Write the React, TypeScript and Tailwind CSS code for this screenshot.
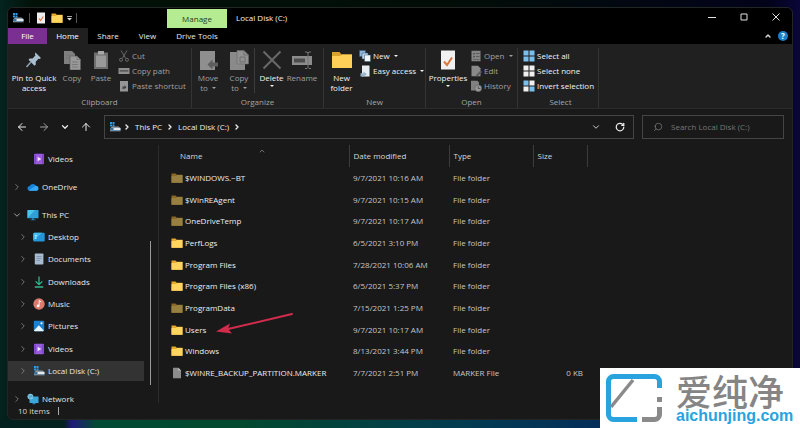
import type { ReactNode } from "react";
import { ArrowLeft, ArrowRight, ArrowUp, ChevronDown, ChevronRight, ChevronUp, RotateCw, Search } from "lucide-react";

type IconProps = { className?: string };

function DriveIcon({ className = "w-3 h-3" }: IconProps) {
  return (
    <svg viewBox="0 0 12 12" className={className}>
      <path d="M1 1h2v2H1zM3.500 1h2v2h-2zM1 3.500h2v2H1zM3.500 3.500h2v2h-2z" fill="#2f9be6" />
      <path d="M3 5.500h6.500L11.500 7H1.500z" fill="#8d9aa4" />
      <path d="M1 7h10.500v3H1z" fill="#3b6f96" />
      <path d="M4.500 7h7v2h-7z" fill="#e3e8ec" />
      <path d="M1 9.500h10.500v.8H1z" fill="#9fb4c2" />
    </svg>
  );
}

function FolderIcon({ dim = false }: { dim?: boolean }) {
  return (
    <svg viewBox="0 0 12 11" className={dim ? "w-3 h-3 shrink-0 opacity-55" : "w-3 h-3 shrink-0"}>
      <path d="M0.5 1h4l1.2 1.3h5.8v7.9h-11z" fill="#e8a92c" />
      <path d="M0.5 3.6h4.4l1.2-1h5.4v7.6h-11z" fill="#ffd560" />
    </svg>
  );
}

function FileIcon() {
  return (
    <svg viewBox="0 0 12 12" className="w-3 h-3 shrink-0">
      <path d="M2 .8h5.4L10 3.4v7.8H2z" fill="#8b8b8b" />
      <path d="M7.4.8v2.6H10z" fill="#c4c4c4" />
    </svg>
  );
}

function VideosIcon() {
  return (
    <svg viewBox="0 0 12 12" className="w-3 h-3">
      <rect x="1" y=".7" width="10" height="10.6" rx="1" fill="#9a5be0" />
      <path d="M1.6 1.5h1v9h-1zM9.4 1.5h1v9h-1z" fill="#6c35b5" />
      <path d="M4.6 3.8v4.4L8.2 6z" fill="#f4e9ff" />
    </svg>
  );
}

function OneDriveIcon() {
  return (
    <svg viewBox="0 0 12 12" className="w-3 h-3">
      <path d="M3 9.8a2.4 2.4 0 0 1-.3-4.8A3.5 3.5 0 0 1 9 4.8a2.6 2.6 0 0 1 .5 5z" fill="#1683dc" />
      <path d="M2 9.3 7.5 5.4a2.5 2.5 0 0 1 4 2.3 2.1 2.1 0 0 1-2 2.1H3z" fill="#37a7f2" />
    </svg>
  );
}

function PcIcon() {
  return (
    <svg viewBox="0 0 12 12" className="w-3 h-3">
      <rect x=".5" y="1" width="11" height="8.3" rx=".6" fill="#2f9fd8" />
      <path d="M.5 9.3V1.6l.6-.6H8z" fill="#4cc4ee" />
      <path d="M5 9.3h2v1.2h1.5v.8h-5v-.8H5z" fill="#2b7fae" />
    </svg>
  );
}

function DesktopIcon() {
  return (
    <svg viewBox="0 0 12 12" className="w-3 h-3">
      <rect x=".3" y="1.8" width="11.4" height="8.6" rx="1" fill="#2196dc" />
      <path d="M.3 9.4V2.8l1-1H9z" fill="#43bdf2" />
      <path d="M2 4h1.6v1.4H2zM2 6.4h1.6v1.4H2z" fill="#c9f0ff" />
    </svg>
  );
}

function DocumentsIcon() {
  return (
    <svg viewBox="0 0 12 12" className="w-3 h-3">
      <rect x="1.8" y=".5" width="8.6" height="11" rx=".8" fill="#a9bccf" />
      <path d="M3.5 3h5v.9h-5zM3.5 5h5v.9h-5zM3.500 7H7v.9H3.500z" fill="#7f95b2" />
    </svg>
  );
}

function DownloadsIcon() {
  return (
    <svg viewBox="0 0 12 12" className="w-3 h-3" fill="none" stroke="#30b58d" strokeWidth="1.3">
      <path d="M6 .5v8M2.600 5.400 6 8.700l3.400-3.300M1.800 11h8.400" />
    </svg>
  );
}

function MusicIcon() {
  return (
    <svg viewBox="0 0 12 12" className="w-3 h-3">
      <circle cx="6" cy="6" r="5.7" fill="#dd7a6c" />
      <path d="M6.200 2.500v5" stroke="#fff" strokeWidth=".9" />
      <path d="M6.200 2.500 8.300 4" stroke="#fff" strokeWidth="1" />
      <circle cx="5.1" cy="7.9" r="1.4" fill="#fff" />
    </svg>
  );
}

function PicturesIcon() {
  return (
    <svg viewBox="0 0 12 12" className="w-3 h-3">
      <rect x=".8" y=".8" width="10.4" height="10.4" rx="1" fill="#1c80d0" />
      <path d="M1 10.600 5.800 5.300l5 5.300-.6.600H1.600z" fill="#e8f6ff" />
      <circle cx="8.5" cy="3.3" r="1.1" fill="#e8f6ff" />
    </svg>
  );
}

function NetworkIcon() {
  return (
    <svg viewBox="0 0 12 12" className="w-3 h-3">
      <path d="M2.500 3.500h9v6.500h-9z" fill="#3aa7d8" />
      <circle cx="3.4" cy="3.6" r="2.9" fill="#7cc7e4" />
      <path d="M1.500 2.600c1.500 1 2.500.6 3.600-.5M2 5.500c.6-1.600 2-2 3.600-1.600" stroke="#2678a8" strokeWidth=".6" fill="none" />
      <path d="M5.500 10h3v1.200h-3z" fill="#2b7fae" />
    </svg>
  );
}

function PinIcon() {
  return (
    <svg viewBox="0 0 20 20" className="w-5 h-5">
      <path d="M11.500 2.500 17 8l-1.500 1-1-.3-2.800 3 .1 2.800-1.300 1.200-6-6L5.700 8.400l2.900.1 2.800-2.900-.5-1.500z" fill="#a9bfcf" />
      <path d="m6.700 12.200-4.200 4.900" stroke="#8fa5b5" strokeWidth="1.5" />
    </svg>
  );
}

function CopyIcon() {
  return (
    <svg viewBox="0 0 20 20" className="w-5 h-5">
      <path d="M2 1h8l3 3v10H2z" fill="#7f7f7f" />
      <path d="M8 6h7l3.500 3.500V20H8z" fill="#999" stroke="#5c5c5c" strokeWidth=".7" />
      <path d="M15 6v3.500h3.500M10 12h6M10 14.500h6M10 17h6M4 5h4M4 8h3" stroke="#727272" strokeWidth=".8" fill="none" />
    </svg>
  );
}

function PasteIcon() {
  return (
    <svg viewBox="0 0 20 20" className="w-5 h-5">
      <path d="M3 2.500h14V19H3z" fill="#6f6f6f" />
      <path d="M5 5.500h10V17H5z" fill="#999" />
      <path d="M7 1h6v3.500H7z" fill="#a8a8a8" />
    </svg>
  );
}

function MoveToIcon() {
  return (
    <svg viewBox="0 0 20 20" className="w-5 h-5">
      <path d="M2 1h15v19H2z" fill="#8f8f8f" />
      <path d="m9.500 14.500 5-5v3H20v4h-5.500v3z" fill="#5e5e5e" />
    </svg>
  );
}

function CopyToIcon() {
  return (
    <svg viewBox="0 0 20 20" className="w-5 h-5">
      <path d="M1 2h15v18H1z" fill="#8a8a8a" />
      <path d="M8 .5h7L19.500 5v9H8z" fill="#929292" stroke="#6a6a6a" strokeWidth=".6" />
      <path d="M14.800.5V5h4.700M11 7h5v5h-5z" stroke="#6a6a6a" strokeWidth=".8" fill="none" />
    </svg>
  );
}

function DeleteIcon() {
  return (
    <svg viewBox="0 0 20 20" className="w-5 h-5" fill="none" stroke="#696969" strokeWidth="2">
      <path d="m1.500 1.500 17 17M18.500 1.500l-17 17" />
    </svg>
  );
}

function RenameIcon() {
  return (
    <svg viewBox="0 0 20 20" className="w-5 h-5">
      <path d="M0 6h20v9H0z" fill="#8c8c8c" />
      <path d="M2 8.500h11v4H2z" fill="#4c4c4c" />
      <path d="M13 2h2l1 1 1-1h2M13 18.500h2l1-1 1 1h2M16 3v14.500" stroke="#777" fill="none" />
    </svg>
  );
}

function NewFolderIcon() {
  return (
    <svg viewBox="0 0 20 20" className="w-5 h-5">
      <path d="M0 2h7.500l2 2.500H20V18H0z" fill="#dba32d" />
      <path d="M0 6h8l2-1.500h10V18H0z" fill="#ffd058" />
    </svg>
  );
}

function PropertiesIcon() {
  return (
    <svg viewBox="0 0 20 20" className="w-5 h-5">
      <path d="M3 .5h14v19H3z" fill="#f0f0f0" />
      <path d="m6 11.500 3 3.500 5-7.500" stroke="#d97840" strokeWidth="2" fill="none" />
    </svg>
  );
}

function ScissorsIcon() {
  return (
    <svg viewBox="0 0 12 12" className="w-3 h-3" fill="none" stroke="#707070" strokeWidth=".9">
      <path d="m3 .5 4.800 8M9 .5l-4.800 8" />
      <circle cx="3" cy="9.8" r="1.5" />
      <circle cx="9" cy="9.8" r="1.5" />
    </svg>
  );
}

function CopyPathIcon() {
  return (
    <svg viewBox="0 0 12 12" className="w-3 h-3">
      <path d="M.5 3h11v6H.5z" fill="#8f8f8f" />
      <path d="M1.700 5.200h8.600v1.200H1.700z" fill="#474747" />
    </svg>
  );
}

function PasteShortcutIcon() {
  return (
    <svg viewBox="0 0 12 12" className="w-3 h-3">
      <path d="M2 1h8v10.500H2z" fill="#969696" />
      <path d="M4.500 9V6.500h2V5l2 2.300-2 2.200V8H6v1z" fill="#444" />
    </svg>
  );
}

function NewItemIcon() {
  return (
    <svg viewBox="0 0 12 12" className="w-3 h-3">
      <path d="M.5.5h6v6h-6z" fill="#8fb5d8" stroke="#33536e" strokeWidth=".5" />
      <path d="M3 3h6v6H3z" fill="#b9d3ea" stroke="#33536e" strokeWidth=".5" />
      <path d="M5.500 5h6v6.500h-6z" fill="#f1f6fa" stroke="#33536e" strokeWidth=".5" />
    </svg>
  );
}

function EasyAccessIcon() {
  return (
    <svg viewBox="0 0 12 12" className="w-3 h-3">
      <path d="M3 .5h7.500v11H3z" fill="#e9eef2" />
      <path d="M1.500 11.500V8.200h3V6.500L8 9.200l-3.500 2.300z" fill="#98b5cc" />
    </svg>
  );
}

function OpenIcon() {
  return (
    <svg viewBox="0 0 12 12" className="w-3 h-3">
      <path d="M1.500.8h9v10.500h-9z" fill="#858585" />
      <path d="M3 3h2v1.500H3zM6 3h3.500v1H6zM3 6h2v1.500H3zM6 6h3.500v1H6zM3 9h6.500v.8H3z" fill="#5a5a5a" />
    </svg>
  );
}

function EditIcon() {
  return (
    <svg viewBox="0 0 12 12" className="w-3 h-3">
      <path d="M1.500.8H8l2.500 2.500v8h-9z" fill="#8a8a8a" />
      <path d="m6 10 4.500-4.500L12 7l-4.500 4.300H6z" fill="#5e5e5e" />
    </svg>
  );
}

function HistoryIcon() {
  return (
    <svg viewBox="0 0 12 12" className="w-3 h-3">
      <path d="M1 .8h6.500L9 2.500v8H1z" fill="#808080" />
      <circle cx="8.3" cy="8.3" r="3.4" fill="#999" stroke="#555" strokeWidth=".5" />
      <path d="M8.300 6.300v2.200h2" stroke="#444" strokeWidth=".8" fill="none" />
    </svg>
  );
}

function SelectIcon({ fills }: { fills: string[] }) {
  return (
    <svg viewBox="0 0 12 12" className="w-3 h-3">
      <rect x=".5" y=".5" width="5" height="5" fill={fills[0]} />
      <rect x="6.5" y=".5" width="5" height="5" fill={fills[1]} />
      <rect x=".5" y="6.5" width="5" height="5" fill={fills[2]} />
      <rect x="6.5" y="6.5" width="5" height="5" fill={fills[3]} />
    </svg>
  );
}

function Caret({ className = "" }: IconProps) {
  return (
    <svg viewBox="0 0 4 2" className={`w-1 h-0.5 shrink-0 ${className}`}>
      <path d="M0 0h4L2 2z" fill="currentColor" />
    </svg>
  );
}

function BigButton({ icon, lines, dim, caret, inlineCaret, className = "" }: {
  icon: ReactNode; lines: string[]; dim?: boolean; caret?: boolean; inlineCaret?: boolean; className?: string;
}) {
  return (
    <button className={`flex flex-col items-center gap-[3px] pt-0.5 ${dim ? "text-[#a0a0a0]" : "text-[#f2f2f2]"} ${className}`}>
      {icon}
      <span className="flex flex-col items-center leading-[10px]">
        {lines.map((line, i) => (
          <span key={line} className="flex items-center gap-1 whitespace-nowrap">
            {line}
            {inlineCaret && i === lines.length - 1 && <Caret />}
          </span>
        ))}
        {caret && <Caret className="mt-0.5" />}
      </span>
    </button>
  );
}

function SmallButton({ icon, label, dim, caret }: { icon: ReactNode; label: string; dim?: boolean; caret?: boolean }) {
  return (
    <button className={`flex items-center gap-0.5 h-[15px] whitespace-nowrap ${dim ? "text-[#a0a0a0]" : "text-[#f2f2f2]"}`}>
      {icon}
      {label}
      {caret && <Caret className="ml-0.5" />}
    </button>
  );
}

function RibbonGroup({ name, className, children }: { name: string; className: string; children: ReactNode }) {
  return (
    <section className={`flex flex-col justify-between shrink-0 border-r border-[#343434] mt-1 ${className}`}>
      <div className="flex">{children}</div>
      <h2 className="text-center text-[#a6a6a6] leading-3">{name}</h2>
    </section>
  );
}

const blue = "#79bfee";
const white = "#f0f0f0";

const thisPc = [
  { label: "Desktop", icon: <DesktopIcon /> },
  { label: "Documents", icon: <DocumentsIcon /> },
  { label: "Downloads", icon: <DownloadsIcon /> },
  { label: "Music", icon: <MusicIcon /> },
  { label: "Pictures", icon: <PicturesIcon /> },
  { label: "Videos", icon: <VideosIcon /> },
  { label: "Local Disk (C:)", icon: <DriveIcon />, active: true },
];

const files = [
  { name: "$WINDOWS.~BT", date: "9/7/2021 10:16 AM", type: "File folder", hidden: true },
  { name: "$WinREAgent", date: "9/7/2021 10:15 AM", type: "File folder", hidden: true },
  { name: "OneDriveTemp", date: "9/7/2021 10:17 AM", type: "File folder", hidden: true },
  { name: "PerfLogs", date: "6/5/2021 3:10 PM", type: "File folder" },
  { name: "Program Files", date: "7/28/2021 10:06 AM", type: "File folder" },
  { name: "Program Files (x86)", date: "6/5/2021 5:37 PM", type: "File folder" },
  { name: "ProgramData", date: "7/15/2021 1:25 PM", type: "File folder", hidden: true },
  { name: "Users", date: "9/7/2021 10:17 AM", type: "File folder" },
  { name: "Windows", date: "8/13/2021 3:44 PM", type: "File folder" },
  { name: "$WINRE_BACKUP_PARTITION.MARKER", date: "7/7/2021 2:51 PM", type: "MARKER File", size: "0 KB" },
];

function TitleBar() {
  return (
    <header className="flex justify-between bg-black">
      <div>
        <div className="flex h-5">
          <div className="flex items-center gap-1 w-[159px] pl-1">
            <DriveIcon />
            <span className="w-px h-2.5 mx-px bg-[#555]" />
            <svg viewBox="0 0 12 12" className="w-3 h-3">
              <path d="M2 .5h8v11H2z" fill="#eee" />
              <path d="m4 6.500 1.600 2L8.300 4.500" stroke="#d97840" strokeWidth="1.2" fill="none" />
            </svg>
            <FolderIcon />
            <svg viewBox="0 0 6 6" className="w-[5px] h-[5px]">
              <path d="M0 0h6v1H0zM0 2.500h6L3 5.500z" fill="#ddd" />
            </svg>
            <span className="w-px h-2.5 bg-[#555]" />
          </div>
          <div className="flex items-center justify-center w-[60px] mt-px bg-[#b5ec92] text-[#26401a]">Manage</div>
          <h1 className="self-center pl-[9px] text-[#f2f2f2]">Local Disk (C:)</h1>
        </div>
        <nav className="flex h-4 text-[#e8e8e8]">
          <button className="w-[39px] bg-[#7c2f93] text-white">File</button>
          <button className="w-[41px] bg-[#202020] text-white">Home</button>
          <button className="w-10">Share</button>
          <button className="w-[39px]">View</button>
          <button className="w-[60px]">Drive Tools</button>
        </nav>
      </div>
      <div className="flex flex-col items-end justify-between">
        <div className="flex items-center text-[#e0e0e0]">
          <button aria-label="Minimize" className="flex justify-center w-8 py-1">
            <svg viewBox="0 0 10 10" className="w-2.5 h-2.5"><path d="M1 5.500h8" stroke="currentColor" /></svg>
          </button>
          <button aria-label="Maximize" className="flex justify-center w-8 py-1">
            <svg viewBox="0 0 10 10" className="w-2.5 h-2.5"><path d="M2 2h6v6H2z" stroke="currentColor" fill="none" /></svg>
          </button>
          <button aria-label="Close" className="flex justify-center w-8 py-1">
            <svg viewBox="0 0 10 10" className="w-2.5 h-2.5"><path d="m1.500 1.500 7 7M8.500 1.500l-7 7" stroke="currentColor" /></svg>
          </button>
        </div>
        <div className="flex items-center gap-1.5 pr-1 pb-[3px]">
          <button aria-label="Collapse ribbon"><ChevronUp className="w-2 h-2 text-[#ddd]" strokeWidth={4} /></button>
          <button aria-label="Help" className="w-2.5 h-2.5 rounded-full bg-[#1c7fc9] text-white font-bold leading-[10px]">?</button>
        </div>
      </div>
    </header>
  );
}

function Ribbon() {
  return (
    <div className="flex h-[65px] shrink-0 bg-[#202020] border-b border-[#2b2b2b]">
      <RibbonGroup name="Clipboard" className="w-[184px]">
        <BigButton icon={<PinIcon />} lines={["Pin to Quick", "access"]} className="w-[52px]" />
        <BigButton icon={<CopyIcon />} lines={["Copy"]} dim className="w-6" />
        <BigButton icon={<PasteIcon />} lines={["Paste"]} dim className="w-[34px]" />
        <div>
          <SmallButton icon={<ScissorsIcon />} label="Cut" dim />
          <SmallButton icon={<CopyPathIcon />} label="Copy path" dim />
          <SmallButton icon={<PasteShortcutIcon />} label="Paste shortcut" dim />
        </div>
      </RibbonGroup>
      <RibbonGroup name="Organize" className="w-[132px]">
        <BigButton icon={<MoveToIcon />} lines={["Move", "to"]} dim inlineCaret className="w-8" />
        <BigButton icon={<CopyToIcon />} lines={["Copy", "to"]} dim inlineCaret className="w-[30px]" />
        <BigButton icon={<DeleteIcon />} lines={["Delete"]} caret className="w-[34px] border-l border-[#3c3c3c]" />
        <BigButton icon={<RenameIcon />} lines={["Rename"]} dim className="w-7" />
      </RibbonGroup>
      <RibbonGroup name="New" className="w-[102px]">
        <BigButton icon={<NewFolderIcon />} lines={["New", "folder"]} className="w-[35px]" />
        <div>
          <SmallButton icon={<NewItemIcon />} label="New" caret />
          <SmallButton icon={<EasyAccessIcon />} label="Easy access" caret />
        </div>
      </RibbonGroup>
      <RibbonGroup name="Open" className="w-[92px]">
        <BigButton icon={<PropertiesIcon />} lines={["Properties"]} caret className="w-[44px]" />
        <div>
          <SmallButton icon={<OpenIcon />} label="Open" dim caret />
          <SmallButton icon={<EditIcon />} label="Edit" dim />
          <SmallButton icon={<HistoryIcon />} label="History" dim />
        </div>
      </RibbonGroup>
      <RibbonGroup name="Select" className="w-[81px] pl-[5px]">
        <div>
          <SmallButton icon={<SelectIcon fills={[blue, blue, blue, blue]} />} label="Select all" />
          <SmallButton icon={<SelectIcon fills={[white, white, white, white]} />} label="Select none" />
          <SmallButton icon={<SelectIcon fills={[blue, white, white, blue]} />} label="Invert selection" />
        </div>
      </RibbonGroup>
    </div>
  );
}

function AddressBar() {
  return (
    <div className="flex items-center gap-2 pt-1.5 pb-1.5 px-2 text-[#ececec]">
      <div className="flex items-center justify-between w-20 pr-1">
        <button aria-label="Back"><ArrowLeft className="w-3 h-3" /></button>
        <button aria-label="Forward"><ArrowRight className="w-3 h-3 text-[#a0a0a0]" /></button>
        <button aria-label="Recent locations"><ChevronDown className="w-2.5 h-2.5" strokeWidth={3} /></button>
        <button aria-label="Up"><ArrowUp className="w-3 h-3" /></button>
      </div>
      <div className="flex items-center flex-1 h-6 gap-0.5 px-1 border border-[#444]">
        <DriveIcon />
        <ChevronRight className="w-2 h-2" strokeWidth={4} />
        <a href="#this-pc" className="px-0.5">This PC</a>
        <ChevronRight className="w-2 h-2" strokeWidth={4} />
        <a href="#c" className="px-0.5">Local Disk (C:)</a>
        <ChevronRight className="w-2 h-2" strokeWidth={4} />
        <button aria-label="Previous locations" className="ml-auto mr-3"><ChevronDown className="w-2.5 h-2.5" /></button>
        <button aria-label="Refresh" className="mr-1"><RotateCw className="w-2.5 h-2.5" strokeWidth={3} /></button>
      </div>
      <label className="flex items-center w-[142px] h-6 gap-2 px-2.5 border border-[#444] text-[#707070]">
        <Search className="w-2.5 h-2.5 shrink-0 -scale-x-100" />
        <input type="search" aria-label="Search" placeholder="Search Local Disk (C:)" className="w-full bg-transparent outline-none placeholder:text-[#777]" />
      </label>
    </div>
  );
}

function TreeRow({ icon, label, arrow, nested, active }: {
  icon: ReactNode; label: string; arrow?: "open" | "closed"; nested?: boolean; active?: boolean;
}) {
  return (
    <a href="#tree" className={`flex items-center shrink-0 h-5 gap-[3px] ${nested ? "pl-2.5" : "pl-1"} ${active ? "bg-[#333]" : ""}`}>
      <span className="w-3">
        {arrow === "open" && <ChevronDown className="w-2.5 h-2.5 text-[#bbb]" />}
        {arrow === "closed" && <ChevronRight className="w-2.5 h-2.5 text-[#858585]" />}
      </span>
      {icon}
      {label}
    </a>
  );
}

function Sidebar() {
  return (
    <aside className="flex w-[150px] shrink-0">
      <div className="flex flex-col flex-1 gap-2 pt-1">
        <TreeRow nested icon={<VideosIcon />} label="Videos" />
        <TreeRow arrow="closed" icon={<OneDriveIcon />} label="OneDrive" />
        <div>
          <TreeRow arrow="open" icon={<PcIcon />} label="This PC" />
          <div className="flex flex-col justify-between h-[154px] mt-0.5">
            {thisPc.map((item) => (
              <TreeRow key={item.label} nested arrow="closed" {...item} />
            ))}
          </div>
        </div>
        <TreeRow arrow="closed" icon={<NetworkIcon />} label="Network" />
      </div>
      <div className="w-3.5 pl-1.5 pt-24 pb-[18px]">
        <div className="w-px h-full bg-[#9a9a9a]" />
      </div>
    </aside>
  );
}

function FileList() {
  return (
    <main className="relative flex-1 border-l border-[#2b2b2b]">
      <table className="h-[239px] table-fixed text-left">
        <thead>
          <tr className="h-[22px] text-[#d6d6d6]">
            <th className="w-[190px] pl-[21px] font-normal">
              <span className="flex items-center">
                Name
                <ChevronUp className="w-2 h-2 ml-14 mb-2.5 text-[#999]" />
              </span>
            </th>
            <th className="w-[100px] pl-1 font-normal border-l border-[#3c3c3c]">Date modified</th>
            <th className="w-[84px] pl-1 font-normal border-l border-[#3c3c3c]">Type</th>
            <th className="w-[54px] pl-1 font-normal border-x border-[#3c3c3c]">Size</th>
          </tr>
        </thead>
        <tbody className="text-[#c6c6c6]">
          {files.map((f) => (
            <tr key={f.name}>
              <td className="pl-3 text-[#eee]">
                <span className="flex items-center gap-0.5">
                  {f.size ? <FileIcon /> : <FolderIcon dim={f.hidden} />}
                  {f.name}
                </span>
              </td>
              <td className="pl-1">{f.date}</td>
              <td className="pl-1">{f.type}</td>
              <td className="pr-1 text-right">{f.size}</td>
            </tr>
          ))}
        </tbody>
      </table>
      <svg viewBox="0 0 78 24" className="absolute left-[57px] top-[166px] w-[78px] h-6">
        <path d="M76 3 12 18" stroke="#d22c4c" strokeWidth="2" strokeLinecap="round" />
        <path d="m0 20.500 14-8-2 5.500 4 4.500z" fill="#d22c4c" />
      </svg>
    </main>
  );
}

function Watermark() {
  return (
    <div className="absolute right-0 bottom-0 flex items-center w-[200px] h-[60px] bg-white pl-1.5">
      <svg viewBox="0 0 56 48" className="w-14 h-12 mr-3.5 shrink-0" fill="none" strokeWidth="5">
        <path d="M53.500 14V7.500a5 5 0 0 0-5-5h-41a5 5 0 0 0-5 5v33a5 5 0 0 0 5 5H31" stroke="#29a3e0" />
        <path d="m5 33 22-27" stroke="#8a8a8a" strokeWidth="3.5" />
        <path d="M53.500 23v5M53.500 33v7.500a5 5 0 0 1-5 5H36" stroke="#8a8a8a" />
      </svg>
      <div className="whitespace-nowrap">
        <div className="text-4xl leading-9 font-medium text-[#858585] font-['Noto_Sans_CJK_SC',sans-serif]">爱纯净</div>
        <div className="text-base leading-4 font-bold text-[#29a3e0] font-['Liberation_Sans','Noto_Sans_CJK_SC',sans-serif]">aichunjing.com</div>
      </div>
    </div>
  );
}

export default function App() {
  return (
    <div className="relative flex flex-col h-screen p-[7px] pb-2 [background:linear-gradient(to_right,#03211e,#04201f_8%,#1f1a7a_9%,#024a33_12%,#02492f_30%,#033a52_60%,#052a5c_80%)_bottom/100%_9px_no-repeat,linear-gradient(to_right,#04231f,#021208_4%,#020c08_60%,#02031a_96%,#0a0638)] text-[8px] leading-3 font-['Open_Sans','Noto_Sans',sans-serif]">
      <div className="flex flex-col flex-1 min-h-0 overflow-hidden rounded-md border border-[#222625] bg-[#191919] text-[#e8e8e8]">
        <TitleBar />
        <Ribbon />
        <AddressBar />
        <div className="flex flex-1 min-h-0">
          <Sidebar />
          <FileList />
        </div>
        <footer className="flex items-center shrink-0 gap-2 h-4 pl-2.5 text-[#d6d6d6]">
          10 items
          <span className="w-px h-2 bg-[#aaa]" />
        </footer>
      </div>
      <Watermark />
    </div>
  );
}
